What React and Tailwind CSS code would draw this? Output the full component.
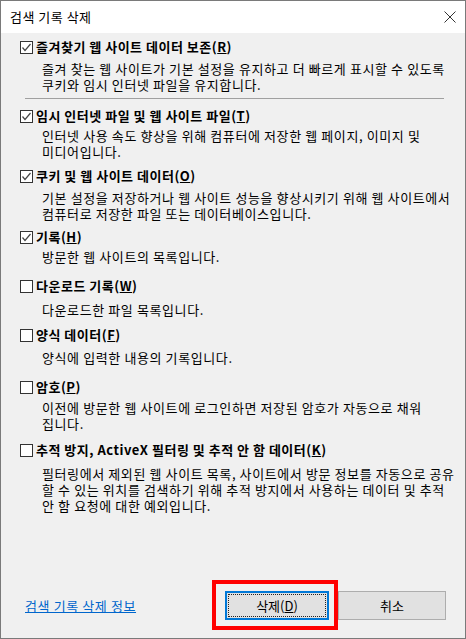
import React, { useState } from "react";

const CheckBox = ({ checked, onToggle }) => (
  <span
    onClick={onToggle}
    className="flex h-[13px] w-[13px] shrink-0 items-center justify-center border border-[#333] bg-white"
  >
    {checked && (
      <svg width="11" height="11" viewBox="0 0 11 11">
        <path d="M1.5 5.5 L4 8.5 L9.5 2" fill="none" stroke="#444" strokeWidth="1.2" />
      </svg>
    )}
  </span>
);

const Label = ({ text, keyChar }) => (
  <span className="ml-[3px] text-[13px] font-bold leading-[16px] tracking-[0.5px] whitespace-nowrap">
    {text}(<span className="underline">{keyChar}</span>)
  </span>
);

const Desc = ({ lines, className }) => (
  <div className={"pl-[22px] text-[13px] leading-[16px] tracking-[0.6px] " + className}>
    {lines.map((l, i) => (
      <div key={i} className="whitespace-nowrap">
        {l}
      </div>
    ))}
  </div>
);

export default function App() {
  const [opts, setOpts] = useState({
    fav: true,
    temp: true,
    cookie: true,
    history: true,
    download: false,
    form: false,
    password: false,
    tracking: false,
  });

  const toggle = (k) => setOpts({ ...opts, [k]: !opts[k] });

  const rows = [
    {
      k: "fav",
      label: "즐겨찾기 웹 사이트 데이터 보존",
      key: "R",
      labelMt: "mt-[6px]",
      descMt: "mt-[6px]",
      lines: [
        "즐겨 찾는 웹 사이트가 기본 설정을 유지하고 더 빠르게 표시할 수 있도록",
        "쿠키와 임시 인터넷 파일을 유지합니다.",
      ],
    },
    {
      k: "temp",
      label: "임시 인터넷 파일 및 웹 사이트 파일",
      key: "T",
      labelMt: "mt-[9px]",
      descMt: "mt-[4px]",
      lines: ["인터넷 사용 속도 향상을 위해 컴퓨터에 저장한 웹 페이지, 이미지 및", "미디어입니다."],
    },
    {
      k: "cookie",
      label: "쿠키 및 웹 사이트 데이터",
      key: "O",
      labelMt: "mt-[8px]",
      descMt: "mt-[6px]",
      lines: [
        "기본 설정을 저장하거나 웹 사이트 성능을 향상시키기 위해 웹 사이트에서",
        "컴퓨터로 저장한 파일 또는 데이터베이스입니다.",
      ],
    },
    {
      k: "history",
      label: "기록",
      key: "H",
      labelMt: "mt-[7px]",
      descMt: "mt-[4px]",
      lines: ["방문한 웹 사이트의 목록입니다."],
    },
    {
      k: "download",
      label: "다운로드 기록",
      key: "W",
      labelMt: "mt-[13px]",
      descMt: "mt-[8px]",
      lines: ["다운로드한 파일 목록입니다."],
    },
    {
      k: "form",
      label: "양식 데이터",
      key: "F",
      labelMt: "mt-[9px]",
      descMt: "mt-[7px]",
      lines: ["양식에 입력한 내용의 기록입니다."],
    },
    {
      k: "password",
      label: "암호",
      key: "P",
      labelMt: "mt-[13px]",
      descMt: "mt-[5px]",
      lines: ["이전에 방문한 웹 사이트에 로그인하면 저장된 암호가 자동으로 채워", "집니다."],
    },
    {
      k: "tracking",
      label: "추적 방지, ActiveX 필터링 및 추적 안 함 데이터",
      key: "K",
      labelMt: "mt-[10px]",
      descMt: "mt-[8px]",
      lines: [
        "필터링에서 제외된 웹 사이트 목록, 사이트에서 방문 정보를 자동으로 공유",
        "할 수 있는 위치를 검색하기 위해 추적 방지에서 사용하는 데이터 및 추적",
        "안 함 요청에 대한 예외입니다.",
      ],
    },
  ];

  return (
    <div className="flex h-[639px] w-[466px] flex-col border border-[#7a7a7a] bg-[#f0f0f0] font-['Noto_Sans_CJK_KR',sans-serif] text-black">
      {/* title bar */}
      <div className="flex h-[32px] shrink-0 items-center justify-between bg-white pl-[9px] pr-[9px]">
        <span className="text-[13px] tracking-[0.5px]">검색 기록 삭제</span>
        <svg width="12" height="12" viewBox="0 0 12 12">
          <path d="M0.5 0.5 L11.5 11.5 M11.5 0.5 L0.5 11.5" stroke="#333" strokeWidth="1" />
        </svg>
      </div>

      <div className="flex flex-col pl-[19px]">
        {rows.map((r, i) => (
          <div key={r.k} className="flex flex-col">
            <div className={"flex h-[16px] items-center " + r.labelMt}>
              <CheckBox checked={opts[r.k]} onToggle={() => toggle(r.k)} />
              <Label text={r.label} keyChar={r.key} />
            </div>
            <Desc lines={r.lines} className={r.descMt} />
            {i === 0 && <div className="ml-[5px] mt-[5px] h-px w-[419px] bg-[#a0a0a0]" />}
          </div>
        ))}
      </div>

      {/* footer */}
      <div className="mt-auto flex items-center pb-[18px] pl-[24px] pr-[19px]">
        <a className="text-[13px] tracking-[0.6px] text-[#0066cc] underline" href="#">
          검색 기록 삭제 정보
        </a>
        <div className="ml-auto flex gap-[9px]">
          <div className="relative">
            <button className="relative h-[29px] w-[104px] border-2 border-[#0078d7] bg-[#e1e1e1] text-[13px]">
              <span className="absolute inset-[1px] border border-dotted border-[#222]" />
              삭제(<span className="underline">D</span>)
            </button>
            <span className="pointer-events-none absolute -bottom-[10px] -left-[13px] -right-[9px] -top-[11px] border-4 border-[#ff0000]" />
          </div>
          <button className="h-[29px] w-[108px] border border-[#adadad] bg-[#e1e1e1] text-[13px]">취소</button>
        </div>
      </div>
    </div>
  );
}
